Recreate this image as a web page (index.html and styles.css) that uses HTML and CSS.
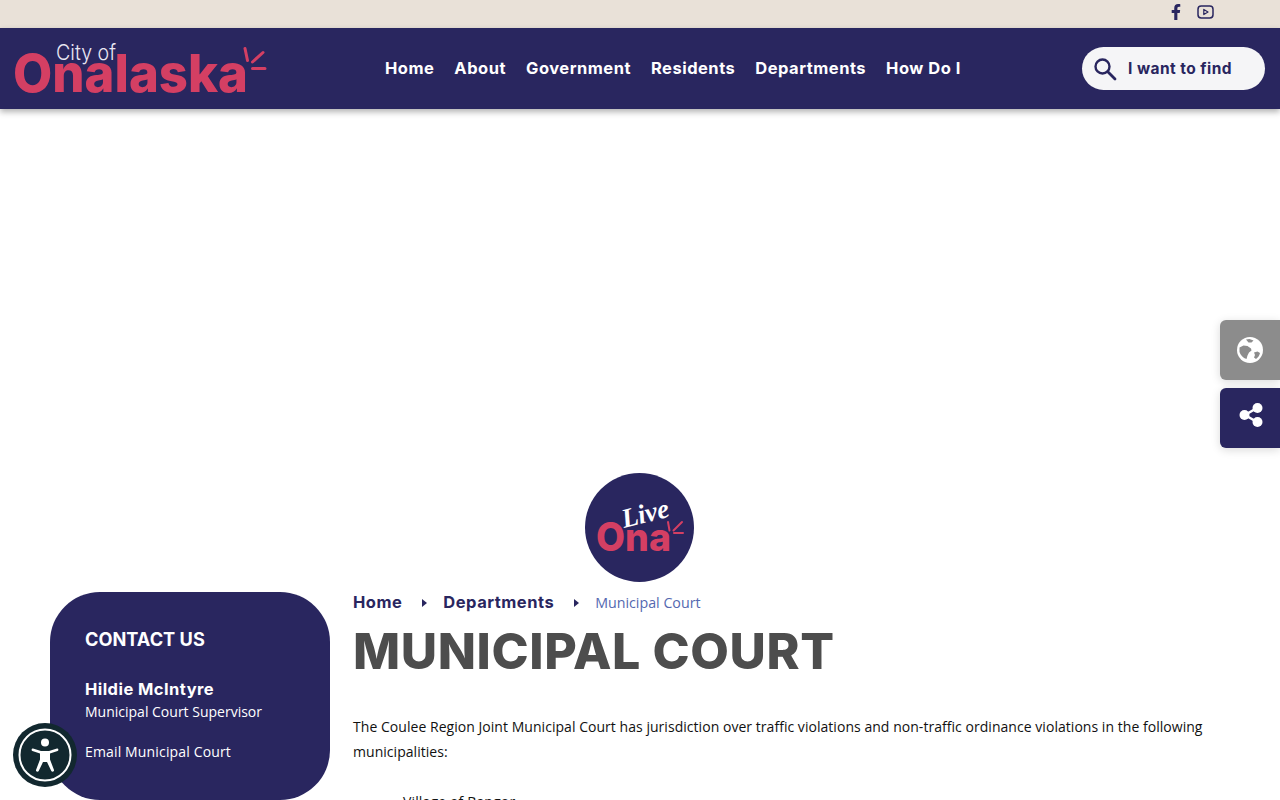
FILE: index.html
```html
<!DOCTYPE html>
<html lang="en">
<head>
<meta charset="utf-8">
<title>Municipal Court | City of Onalaska</title>
<link rel="stylesheet" href="styles.css">
</head>
<body>
<div class="topbar">
  <a class="social" href="#" aria-label="Facebook">
    <svg width="10" height="16" viewBox="0 0 320 512"><path fill="#29265f" d="M279 288l14-93h-89v-60c0-25 12-50 52-50h41V6S260 0 225 0c-73 0-121 44-121 125v70H22v93h82v224h100V288z"/></svg>
  </a>
  <a class="social" href="#" aria-label="YouTube">
    <svg width="17" height="14" viewBox="0 0 17 14"><rect x="1" y="1" width="15" height="12" rx="3.2" fill="none" stroke="#29265f" stroke-width="1.5"/><path d="M6.8 4.4v5.2L11 7z" fill="none" stroke="#29265f" stroke-width="1.2" stroke-linejoin="round"/></svg>
  </a>
</div>
<header class="header">
  <a class="logo" href="#" aria-label="City of Onalaska">
    <svg width="252" height="60" viewBox="0 0 252 60">
      <text class="logo-city" x="41" y="21" textLength="60" lengthAdjust="spacingAndGlyphs">City of</text>
      <text class="logo-name" x="-2" y="53" textLength="235" lengthAdjust="spacingAndGlyphs">Onalaska</text>
      <path d="M230 9.500l2.500 12M248 13.500L237.500 23M250 29.500h-12.500" fill="none" stroke="#d43f63" stroke-width="3" stroke-linecap="round"/>
    </svg>
  </a>
  <nav class="nav">
    <a href="#">Home</a>
    <a href="#">About</a>
    <a href="#">Government</a>
    <a href="#">Residents</a>
    <a href="#">Departments</a>
    <a href="#">How Do I</a>
  </nav>
  <div class="search">
    <svg width="24" height="24" viewBox="0 0 24 24"><circle cx="9.500" cy="9.500" r="7" fill="none" stroke="#29265f" stroke-width="2.400"/><path d="M14.800 14.800L22 22" stroke="#29265f" stroke-width="2.800" stroke-linecap="round"/></svg>
    <span>I want to find</span>
  </div>
</header>
<section class="hero">
  <div class="badge">
    <svg width="109" height="109" viewBox="0 0 109 109">
      <circle cx="54.500" cy="54.500" r="54.500" fill="#29265f"/>
      <text class="badge-live" x="39" y="55" transform="rotate(-14 39 55)">Live</text>
      <text class="badge-ona" x="11" y="78" textLength="75" lengthAdjust="spacingAndGlyphs">Ona</text>
      <path d="M83 49l1.500 8.500M97 49l-8.500 8.500M98 60h-9" fill="none" stroke="#d43f63" stroke-width="2" stroke-linecap="round"/>
    </svg>
  </div>
</section>
<div class="columns">
  <aside class="contact">
    <h2>CONTACT US</h2>
    <p class="contact-name">Hildie McIntyre</p>
    <p class="contact-role">Municipal Court Supervisor</p>
    <a class="contact-link" href="#">Email Municipal Court</a>
  </aside>
  <main class="content">
    <ol class="crumbs">
      <li><a href="#">Home</a></li>
      <li class="sep"></li>
      <li><a href="#">Departments</a></li>
      <li class="sep"></li>
      <li class="current">Municipal Court</li>
    </ol>
    <h1>MUNICIPAL COURT</h1>
    <p class="lead">The Coulee Region Joint Municipal Court has jurisdiction over traffic violations and non-traffic ordinance violations in the following municipalities:</p>
    <ul class="towns"><li>Village of Bangor</li></ul>
  </main>
</div>
<div class="float-tools">
  <a class="tool tool-grey" href="#" aria-label="Translate">
    <svg width="26" height="26" viewBox="0 0 26 26"><circle cx="13" cy="13" r="13" fill="#fff"/><path d="M9 2.500l3.500-.5 4 1.500-2 2h-3zM2.500 10.500l4-2 4 .5 3.500 2.500.5 2-2.500 2-1.500 3-1 3.500C6 21 3.500 18 2.500 15zM17 15.500l3.500-1 2.500 1.500c-.5 2.500-2 4.500-4 6l-2-1.500 1-2.500z" fill="#8c8c8c"/></svg>
  </a>
  <a class="tool tool-navy" href="#" aria-label="Share">
    <svg width="24" height="24" viewBox="0 0 24 24"><path d="M18 5L6 12l12 7" fill="none" stroke="#fff" stroke-width="2.500"/><circle cx="18.500" cy="5" r="5" fill="#fff"/><circle cx="5.500" cy="12" r="5" fill="#fff"/><circle cx="18.500" cy="19" r="5" fill="#fff"/></svg>
  </a>
</div>
<a class="access" href="#" aria-label="Accessibility">
  <svg width="64" height="64" viewBox="0 0 64 64">
    <circle cx="32" cy="32" r="32" fill="#12282f"/>
    <circle cx="32" cy="32" r="25.500" fill="none" stroke="#fff" stroke-width="2"/>
    <circle cx="32" cy="19.500" r="4" fill="#fff"/>
    <path d="M20 25.500l8 2.500h8l8-2.500c1.400-.4 2 2 .6 2.500L37 30.500v6l4 10.500c.5 1.600-2 2.400-2.700 1L34 39h-4l-4.300 9c-.7 1.400-3.200.6-2.700-1l4-10.500v-6L19.400 28c-1.400-.5-.8-2.900.6-2.500z" fill="#fff"/>
  </svg>
</a>
</body>
</html>
```
FILE: styles.css
```css
* { box-sizing: border-box; }
html, body { height: 800px; overflow: hidden; }
body { margin: 0; background: #fff; font-family: "Open Sans", "Noto Sans", sans-serif; color: #111; }
a { color: inherit; text-decoration: none; }
h1, h2, p, ol, ul { margin: 0; padding: 0; }

.topbar { height: 28px; background: #e9e1d8; display: flex; justify-content: flex-end; align-items: center; gap: 16px; padding: 0 66px 4px 0; }
.social { display: flex; align-items: center; }

.header { position: relative; z-index: 2; height: 81px; background: #29265f; box-shadow: 0 3px 6px rgba(0,0,0,.3); display: flex; align-items: center; padding: 0 15px; }
.logo { display: block; width: 252px; height: 60px; }
.logo svg { display: block; overflow: visible; }
.logo-city { font: 300 22px Inter, sans-serif; fill: #e9e6f3; }
.logo-name { font: 800 52px Inter, sans-serif; fill: #d43f63; }

.nav { display: flex; gap: 20px; margin: -2px 0 0 118px; font: 700 16.5px Inter, sans-serif; letter-spacing: .5px; color: #fff; }
.search { margin-left: auto; width: 183px; height: 43px; border-radius: 22px; background: #f5f5f7; display: flex; align-items: center; gap: 11px; padding-left: 11px; color: #29265f; font: 700 15.500px Inter, sans-serif; letter-spacing: .45px; }

.hero { height: 483px; display: flex; justify-content: center; align-items: flex-end; padding: 0 1px 10px 0; }
.badge { width: 109px; height: 109px; }
.badge svg { display: block; }
.badge-live { font: italic 700 27px "Liberation Serif", serif; fill: #fff; }
.badge-ona { font: 800 39px Inter, sans-serif; fill: #d43f63; }

.columns { display: flex; align-items: flex-start; gap: 23px; padding-left: 50px; padding-right: 70px; }
.contact { flex: none; width: 280px; height: 208px; border-radius: 50px; background: #29265f; color: #fff; padding: 36px 35px 0; }
.contact h2 { font: 700 18.200px/22px Inter, sans-serif; }
.contact-name { margin-top: 28px; font: 700 16.500px/22px Inter, sans-serif; letter-spacing: .45px; }
.contact-role { margin-top: 1px; font-size: 14px; line-height: 22px; }
.contact-link { display: block; margin-top: 18px; font-size: 14px; line-height: 22px; letter-spacing: .15px; }

.content { flex: 1; min-width: 0; }
.crumbs { list-style: none; display: flex; align-items: center; height: 20px; color: #29265f; font: 700 16.500px Inter, sans-serif; letter-spacing: .5px; }
.sep { width: 0; height: 0; border-left: 5px solid #29265f; border-top: 4px solid transparent; border-bottom: 4px solid transparent; margin: 1px 16px 0 20px; }
.current { font: 400 14.250px "Open Sans", sans-serif; letter-spacing: 0; color: #5468b0; }
h1 { margin-top: 10px; font: 800 50px/58px Inter, sans-serif; letter-spacing: .6px; color: #4d4d4d; }
.lead { margin-top: 34px; font-size: 14px; line-height: 25px; letter-spacing: .04px; color: #111; }
.towns { list-style: none; margin-top: 25px; padding-left: 50px; font-size: 14px; line-height: 25px; letter-spacing: .15px; }

.float-tools { position: fixed; right: 0; top: 320px; display: flex; flex-direction: column; gap: 8px; }
.tool { width: 60px; height: 60px; border-radius: 6px 0 0 6px; display: flex; align-items: center; justify-content: center; box-shadow: 0 2px 10px rgba(0,0,0,.15); }
.tool-grey { background: #8c8c8c; }
.tool-navy { background: #29265f; }
.tool-navy svg { margin: -7px 0 0 1px; }
.tool-grey svg { margin-top: -1px; }
.access { position: fixed; left: 13px; top: 723px; display: block; width: 64px; height: 64px; }
.access svg { display: block; }
```
